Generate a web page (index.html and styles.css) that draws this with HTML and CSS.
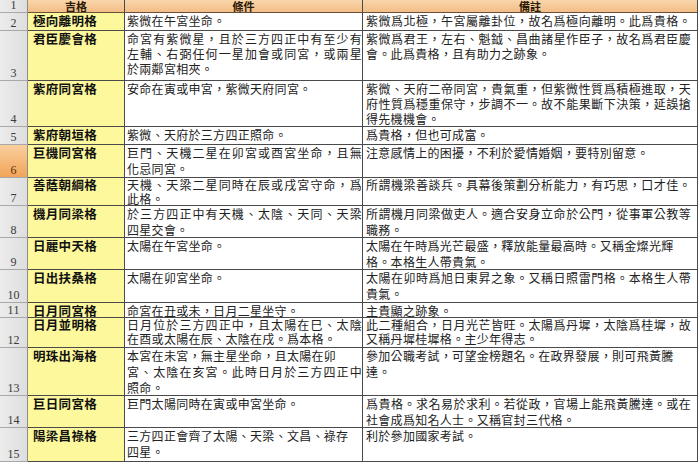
FILE: index.html
```html
<!DOCTYPE html>
<html lang="zh-Hant">
<head>
<meta charset="utf-8">
<title>吉格</title>
<link rel="stylesheet" href="styles.css">
</head>
<body>
<div class="sheet">
  <div class="rh">1</div><div class="hd">吉格</div><div class="hd">條件</div><div class="hd">備註</div>

  <div class="rh">2</div><div class="ca">極向離明格</div>
  <div class="cb"><span class="ln">紫微在午宮坐命<i class="p">。</i></span></div>
  <div class="cc"><span class="ln full">紫微爲北極<i class="p">，</i>午宮屬離卦位<i class="p">，</i>故名爲極向離明<i class="p">。</i>此爲貴格<i class="p">。</i></span></div>

  <div class="rh">3</div><div class="ca">君臣慶會格</div>
  <div class="cb"><span class="ln full">命宮有紫微星<i class="p">，</i>且於三方四正中有至少有</span><span class="ln full">左輔<i class="p">、</i>右弼任何一星加會或同宮<i class="p">，</i>或兩星</span><span class="ln">於兩鄰宮相夾<i class="p">。</i></span></div>
  <div class="cc"><span class="ln full">紫微爲君王<i class="p">，</i>左右<i class="p">、</i>魁鉞<i class="p">、</i>昌曲諸星作臣子<i class="p">，</i>故名爲君臣慶</span><span class="ln">會<i class="p">。</i>此爲貴格<i class="p">，</i>且有助力之跡象<i class="p">。</i></span></div>

  <div class="rh">4</div><div class="ca">紫府同宮格</div>
  <div class="cb"><span class="ln">安命在寅或申宮<i class="p">，</i>紫微天府同宮<i class="p">。</i></span></div>
  <div class="cc"><span class="ln full">紫微<i class="p">、</i>天府二帝同宮<i class="p">，</i>貴氣重<i class="p">，</i>但紫微性質爲積極進取<i class="p">，</i>天</span><span class="ln full">府性質爲穩重保守<i class="p">，</i>步調不一<i class="p">。</i>故不能果斷下決策<i class="p">，</i>延誤搶</span><span class="ln">得先機機會<i class="p">。</i></span></div>

  <div class="rh">5</div><div class="ca">紫府朝垣格</div>
  <div class="cb"><span class="ln">紫微<i class="p">、</i>天府於三方四正照命<i class="p">。</i></span></div>
  <div class="cc"><span class="ln">爲貴格<i class="p">，</i>但也可成富<i class="p">。</i></span></div>

  <div class="rh sel">6</div><div class="ca loose">巨機同宮格</div>
  <div class="cb loose"><span class="ln full">巨門<i class="p">、</i>天機二星在卯宮或酉宮坐命<i class="p">，</i>且無</span><span class="ln">化忌同宮<i class="p">。</i></span></div>
  <div class="cc loose"><span class="ln">注意感情上的困擾<i class="p">，</i>不利於愛情婚姻<i class="p">，</i>要特別留意<i class="p">。</i></span></div>

  <div class="rh">7</div><div class="ca tight">善蔭朝綱格</div>
  <div class="cb tight"><span class="ln full">天機<i class="p">、</i>天梁二星同時在辰或戌宮守命<i class="p">，</i>爲</span><span class="ln">此格<i class="p">。</i></span></div>
  <div class="cc tight"><span class="ln full">所謂機梁善談兵<i class="p">。</i>具幕後策劃分析能力<i class="p">，</i>有巧思<i class="p">，</i>口才佳<i class="p">。</i></span></div>

  <div class="rh">8</div><div class="ca loose">機月同梁格</div>
  <div class="cb loose"><span class="ln full">於三方四正中有天機<i class="p">、</i>太陰<i class="p">、</i>天同<i class="p">、</i>天梁</span><span class="ln">四星交會<i class="p">。</i></span></div>
  <div class="cc loose"><span class="ln full">所謂機月同梁做吏人<i class="p">。</i>適合安身立命於公門<i class="p">，</i>從事軍公教等</span><span class="ln">職務<i class="p">。</i></span></div>

  <div class="rh">9</div><div class="ca loose">日麗中天格</div>
  <div class="cb loose"><span class="ln">太陽在午宮坐命<i class="p">。</i></span></div>
  <div class="cc loose"><span class="ln">太陽在午時爲光芒最盛<i class="p">，</i>釋放能量最高時<i class="p">。</i>又稱金燦光輝</span><span class="ln">格<i class="p">。</i>本格生人帶貴氣<i class="p">。</i></span></div>

  <div class="rh">10</div><div class="ca loose">日出扶桑格</div>
  <div class="cb loose"><span class="ln">太陽在卯宮坐命<i class="p">。</i></span></div>
  <div class="cc loose"><span class="ln full">太陽在卯時爲旭日東昇之象<i class="p">。</i>又稱日照雷門格<i class="p">。</i>本格生人帶</span><span class="ln">貴氣<i class="p">。</i></span></div>

  <div class="rh">11</div><div class="ca">日月同宮格</div>
  <div class="cb"><span class="ln">命宮在丑或未<i class="p">，</i>日月二星坐守<i class="p">。</i></span></div>
  <div class="cc"><span class="ln">主貴顯之跡象<i class="p">。</i></span></div>

  <div class="rh">12</div><div class="ca tight">日月並明格</div>
  <div class="cb tight"><span class="ln full">日月位於三方四正中<i class="p">，</i>且太陽在巳<i class="p">、</i>太陰</span><span class="ln">在酉或太陽在辰<i class="p">、</i>太陰在戌<i class="p">。</i>爲本格<i class="p">。</i></span></div>
  <div class="cc tight"><span class="ln full">此二種組合<i class="p">，</i>日月光芒皆旺<i class="p">。</i>太陽爲丹墀<i class="p">，</i>太陰爲桂墀<i class="p">，</i>故</span><span class="ln">又稱丹墀桂墀格<i class="p">。</i>主少年得志<i class="p">。</i></span></div>

  <div class="rh">13</div><div class="ca loose">明珠出海格</div>
  <div class="cb loose"><span class="ln">本宮在未宮<i class="p">，</i>無主星坐命<i class="p">，</i>且太陽在卯</span><span class="ln full">宮<i class="p">、</i>太陰在亥宮<i class="p">。</i>此時日月於三方四正中</span><span class="ln">照命<i class="p">。</i></span></div>
  <div class="cc loose"><span class="ln">參加公職考試<i class="p">，</i>可望金榜題名<i class="p">。</i>在政界發展<i class="p">，</i>則可飛黃騰</span><span class="ln">達<i class="p">。</i></span></div>

  <div class="rh">14</div><div class="ca loose">巨日同宮格</div>
  <div class="cb loose"><span class="ln">巨門太陽同時在寅或申宮坐命<i class="p">。</i></span></div>
  <div class="cc loose"><span class="ln full">爲貴格<i class="p">。</i>求名易於求利<i class="p">。</i>若從政<i class="p">，</i>官場上能飛黃騰達<i class="p">。</i>或在</span><span class="ln">社會成爲知名人士<i class="p">。</i>又稱官封三代格<i class="p">。</i></span></div>

  <div class="rh">15</div><div class="ca loose">陽梁昌祿格</div>
  <div class="cb loose"><span class="ln">三方四正會齊了太陽<i class="p">、</i>天梁<i class="p">、</i>文昌<i class="p">、</i>祿存</span><span class="ln">四星<i class="p">。</i></span></div>
  <div class="cc loose"><span class="ln">利於參加國家考試<i class="p">。</i></span></div>
</div>
</body>
</html>
```

FILE: styles.css
```css
html, body {
  margin: 0;
  padding: 0;
  background: #ffffff;
  overflow: hidden;
}

.sheet {
  display: grid;
  width: 698px;
  grid-template-columns: 28px 97px 238px 335px;
  grid-template-rows: 13px 18px 50px 46px 18px 33px 28px 32px 32px 33px 15px 30px 48px 32px 34px;
  font-family: "Noto Sans CJK TC", "Noto Sans CJK SC", sans-serif;
  font-size: 12px;
  font-kerning: none;
  color: #222;
}

.sheet > div {
  box-sizing: border-box;
  white-space: nowrap;
  border-right: 1px solid #4a4a4a;
  border-bottom: 1px solid #4a4a4a;
}

.rh {
  background: linear-gradient(to right, #ececec, #dedede);
  border-right: 1px solid #8c8c8c !important;
  border-bottom: 1px solid #a8a8a8 !important;
  color: #3a3a3a;
  font-family: "Liberation Serif", "DejaVu Serif", serif;
  font-size: 12px;
  line-height: 12px;
  display: flex;
  align-items: flex-end;
  justify-content: center;
  padding-bottom: 1px;
}

.rh.sel {
  background: linear-gradient(to bottom, #f9cf9d, #f2a45a);
  color: #5a3000;
}

.hd {
  background: linear-gradient(to bottom, #f9d6ac, #f3bd86);
  border-bottom: 1px solid #6a5038 !important;
  font-weight: 700;
  font-size: 11px;
  line-height: 13px;
  text-align: center;
  color: #2a1a08;
}

.ca {
  background: #fdf89c;
  font-weight: 700;
  font-size: 12.5px;
  letter-spacing: 0.3px;
  color: #111;
  padding: 0 0 0 5px;
  line-height: 15px;
}

.cb {
  background: #ffffff;
  padding: 0 0 0 2px;
  line-height: 15px;
  letter-spacing: 0.3px;
}

.cc {
  background: #ffffff;
  padding: 0 6px 0 3px;
  line-height: 15px;
  letter-spacing: 0.3px;
}

.ln {
  display: block;
}

.full {
  white-space: normal;
  text-align: justify;
  text-align-last: justify;
}

.p {
  display: inline-block;
  width: 12.3px;
  font-style: normal;
  text-align: center;
  letter-spacing: 0;
}

.loose {
  line-height: 16px;
}

.tight {
  line-height: 14px;
}
```
